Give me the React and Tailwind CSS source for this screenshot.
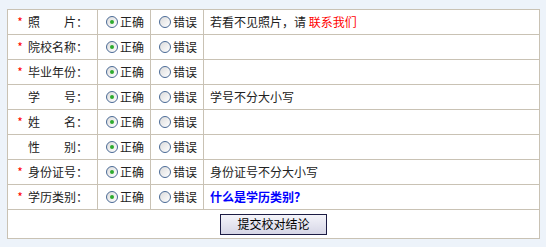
const rows = [
  { label: '照　　片', required: true, note: 'photo' },
  { label: '院校名称', required: true },
  { label: '毕业年份', required: true },
  { label: '学　　号', required: false, note: '学号不分大小写' },
  { label: '姓　　名', required: true },
  { label: '性　　别', required: false },
  { label: '身份证号', required: true, note: '身份证号不分大小写' },
  { label: '学历类别', required: true, note: 'type' },
];

const Radio = ({ checked }) => (
  <span className="inline-flex h-[12px] w-[12px] shrink-0 items-center justify-center rounded-full border border-[#4a6a96] bg-gradient-to-br from-[#dcdcdc] to-white">
    {checked ? <span className="h-[4px] w-[4px] rounded-full bg-[#2eaa2e]" /> : null}
  </span>
);

const Note = ({ note }) => {
  if (note === 'photo')
    return (
      <span>
        若看不见照片，请 <span className="text-[#ff0000]">联系我们</span>
      </span>
    );
  if (note === 'type') return <span className="font-bold text-[#0000ff]">什么是学历类别？</span>;
  return note ? <span>{note}</span> : null;
};

export default function App() {
  return (
    <div
      className="h-[247px] w-[546px] bg-[#edf3fa] pl-[7px] pt-[9px] text-[12px] text-[#222]"
      style={{ fontFamily: '"Noto Sans CJK SC", "Noto Sans", sans-serif' }}
    >
      <table className="w-[533px] border-collapse border border-[#c4c4c4] bg-white">
        <tbody>
          {rows.map((row) => (
            <tr key={row.label} className="h-[25px]">
              <td className="w-[90px] border border-[#c9c2b4] pr-[9px] text-right leading-none">
                {row.required ? <span className="mr-[5px] text-[#ff0000]">*</span> : null}
                {row.label}：
              </td>
              <td className="w-[53px] border border-[#c9c2b4] pl-[8px]">
                <span className="flex items-center gap-[2px]">
                  <Radio checked />
                  正确
                </span>
              </td>
              <td className="w-[53px] border border-[#c9c2b4] pl-[8px]">
                <span className="flex items-center gap-[2px]">
                  <Radio />
                  错误
                </span>
              </td>
              <td className="border border-[#c9c2b4] pl-[6px]">
                <Note note={row.note} />
              </td>
            </tr>
          ))}
          <tr className="h-[29px]">
            <td colSpan={4} className="border border-[#c9c2b4] text-center">
              <button className="h-[21px] w-[107px] border border-[#1c1c44] bg-gradient-to-b from-[#f4f4fa] to-[#d6d6e6] text-[12px] leading-none text-black">
                提交校对结论
              </button>
            </td>
          </tr>
        </tbody>
      </table>
    </div>
  );
}
